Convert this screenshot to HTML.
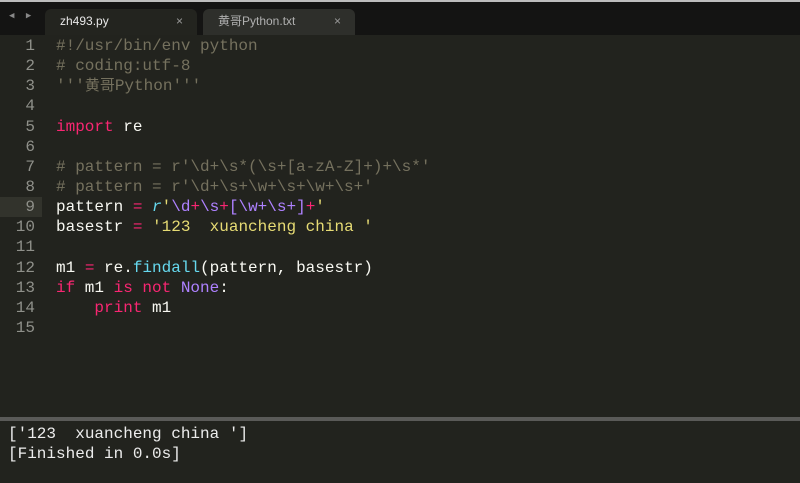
<!DOCTYPE html>
<html><head><style>
html,body{margin:0;width:800px;height:483px;overflow:hidden}
body{background:#22231e;position:relative;font-family:"Liberation Mono",monospace}
.top{position:absolute;left:0;top:0;width:800px;height:2px;background:#bdbdbd}
.bar{position:absolute;left:0;top:2px;width:800px;height:33px;background:#141413}
.tab{position:absolute;top:9px;height:26px;border-radius:6px 6px 0 0;font:12px "Liberation Sans","Noto Sans CJK SC",sans-serif;line-height:24px;padding-left:15px;box-sizing:border-box}
.t1{left:45px;width:152px;background:#23241f;color:#e8e8e8}
.t2{left:203px;width:152px;background:#2e2f2b;color:#b0b0b0}
.x{position:absolute;right:14px;top:0;font-size:12px;color:#999}
.arr{position:absolute;left:9px;top:11px;color:#888;font-size:9px;letter-spacing:3px}
.code{position:absolute;left:0;top:36px;width:800px;font-size:16px;line-height:20.15px}
.l{height:20.15px;position:relative;white-space:pre}
.n{display:inline-block;width:35px;text-align:right;color:#8f908a;margin-right:21px}
.hl{position:absolute;left:0;top:0;width:42px;height:20px;background:#32332c}
.c{color:#75715e}.w{color:#f8f8f2}.k{color:#f92672}.s{color:#e6db74}.b{color:#66d9ef}.p{color:#ae81ff}
.sep{position:absolute;left:0;top:417px;width:800px;height:4px;background:#5a5a58}
.out{position:absolute;left:8px;top:424px;font-size:16px;line-height:20px;color:#ececec;white-space:pre;font-family:"Liberation Mono",monospace}
</style></head><body>
<div class="top"></div><div class="bar"></div>
<div class="arr">◀ ▶</div>
<div class="tab t2">黄哥Python.txt<span class="x">×</span></div>
<div class="tab t1">zh493.py<span class="x">×</span></div>
<div class="code"><div class="l"><span class="n">1</span><span class="c">#!/usr/bin/env python</span></div><div class="l"><span class="n">2</span><span class="c"># coding:utf-8</span></div><div class="l"><span class="n">3</span><span class="c">'''<span style="font-family:'Noto Sans CJK SC',sans-serif;font-size:15px;line-height:1">黄哥</span>Python'''</span></div><div class="l"><span class="n">4</span></div><div class="l"><span class="n">5</span><span class="k">import</span><span class="w"> re</span></div><div class="l"><span class="n">6</span></div><div class="l"><span class="n">7</span><span class="c"># pattern = r'\d+\s*(\s+[a-zA-Z]+)+\s*'</span></div><div class="l"><span class="n">8</span><span class="c"># pattern = r'\d+\s+\w+\s+\w+\s+'</span></div><div class="l"><span class="hl"></span><span class="n" style="position:relative">9</span><span class="w">pattern </span><span class="k">=</span> <span class="b" style="font-style:italic">r</span><span class="s">'</span><span class="p">\d</span><span class="k">+</span><span class="p">\s</span><span class="k">+</span><span class="p">[\w+\s+]</span><span class="k">+</span><span class="s">'</span></div><div class="l"><span class="n">10</span><span class="w">basestr </span><span class="k">=</span> <span class="s">'123  xuancheng china '</span></div><div class="l"><span class="n">11</span></div><div class="l"><span class="n">12</span><span class="w">m1 </span><span class="k">=</span><span class="w"> re.</span><span class="b">findall</span><span class="w">(pattern, basestr)</span></div><div class="l"><span class="n">13</span><span class="k">if</span><span class="w"> m1 </span><span class="k">is not</span> <span class="p">None</span><span class="w">:</span></div><div class="l"><span class="n">14</span>    <span class="k">print</span><span class="w"> m1</span></div><div class="l"><span class="n">15</span></div></div>
<div class="sep"></div>
<div class="out">['123  xuancheng china ']
[Finished in 0.0s]</div>
</body></html>
